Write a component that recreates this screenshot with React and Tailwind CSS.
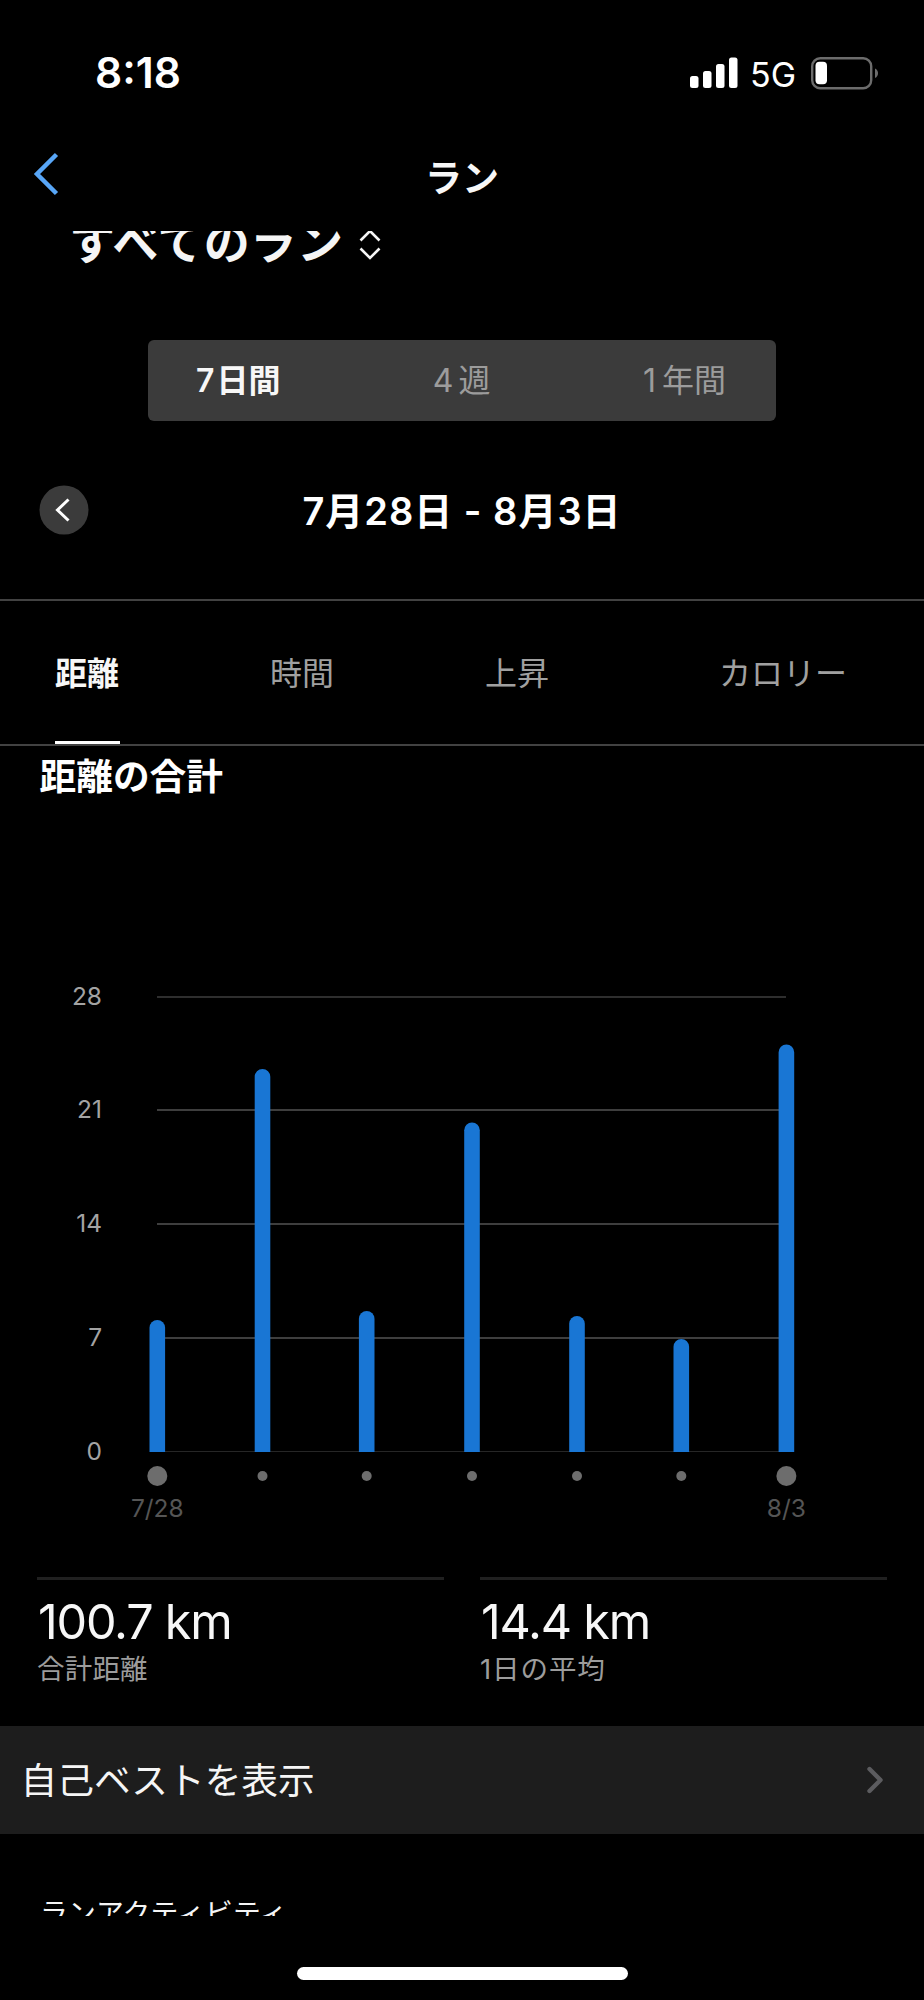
const periods = [
  { count: '7', unit: '日間', style: 'font-semibold text-[#f7f7f7]', gap: 'mr-[2px]' },
  { count: '4', unit: '週', style: 'text-[#9c9c9c]', gap: 'mr-[5px]' },
  { count: '1', unit: '年間', style: 'text-[#9c9c9c]', gap: 'mr-[6px]' },
];

const metrics = [
  { label: '距離', cell: 'w-[215px] pl-[55px]', active: true },
  { label: '時間', cell: 'w-[215px] pl-[55px]', active: false },
  { label: '上昇', cell: 'w-[215px] pl-[55px]', active: false },
  { label: 'カロリー', cell: 'flex-1 pl-[74px]', active: false },
];

const gridLines = [
  { value: 28, y: 57, color: '#2e2e2e' },
  { value: 21, y: 170, color: '#3e3e3e' },
  { value: 14, y: 284, color: '#3e3e3e' },
  { value: 7, y: 398, color: '#3e3e3e' },
  { value: 0, y: 511.5, color: '#262626' },
];

const days = [
  { x: 157.3, top: 380, label: '7/28' },
  { x: 262.5, top: 129 },
  { x: 366.7, top: 371 },
  { x: 472, top: 182.5 },
  { x: 577, top: 376 },
  { x: 681.3, top: 399 },
  { x: 786.4, top: 104.5, label: '8/3' },
];

const stats = [
  { value: '100.7 km', label: '合計距離', style: 'tracking-[0.2px]' },
  { value: '14.4 km', label: '1日の平均', style: 'tracking-[0.9px]' },
];

function StatusBar() {
  return (
    <div className="flex h-[147px] items-start justify-between pt-[48px] pr-[45px] pl-[95px]">
      <span className="text-[42.500px] leading-[50px] font-semibold">8:18</span>
      <div className="flex h-[50px] items-center">
        <svg width="48" height="50" viewBox="0 0 48 50" fill="#fff">
          <rect x="0" y="28" width="8.5" height="12" rx="2.5" />
          <rect x="13" y="23" width="8.5" height="17" rx="2.5" />
          <rect x="26" y="16" width="8.5" height="24" rx="2.5" />
          <rect x="39" y="9.5" width="8.5" height="30.5" rx="2.5" />
        </svg>
        <span className="ml-[12px] w-[60px] pt-[3px] text-[34px] leading-[50px]">5G</span>
        <svg width="69" height="50" viewBox="0 0 69 50">
          <rect x="2.2" y="10.2" width="59" height="30" rx="8" fill="none" stroke="#6c6c6c" strokeWidth="2.4" />
          <rect x="5.5" y="13.8" width="11.5" height="22.4" rx="4" fill="#fff" />
          <path d="M65 20.5c4 1.5 4 8 0 9.500z" fill="#6c6c6c" />
        </svg>
      </div>
    </div>
  );
}

function Header() {
  return (
    <header className="grid h-[84px] grid-cols-3 items-start">
      <svg className="ml-[30px]" width="34" height="54" viewBox="0 0 34 54" fill="none">
        <path d="M26.500 7.500 7 27l19.500 19.500" stroke="#58a6f7" strokeWidth="4.500" />
      </svg>
      <h1 className="pt-[7px] text-center text-[37px] leading-[50px] font-semibold text-[#f7f7f7]">ラン</h1>
    </header>
  );
}

function SportPicker() {
  return (
    <div className="flex h-[109px] items-start overflow-hidden pl-[69px]">
      <span className="-mt-[17px] text-[46px] leading-[56px] font-semibold tracking-[0.6px] text-[#f5f5f5]">
        すべてのラン
      </span>
      <svg className="ml-[14px]" width="24" height="32" viewBox="0 0 24 32" fill="none" stroke="#f5f5f5" strokeWidth="2.600">
        <path d="M2.500 9.500 12 0l9.500 9.500M2.500 17.500 12 27l9.500-9.500" />
      </svg>
    </div>
  );
}

function PeriodSwitch() {
  return (
    <div className="mx-[148px] flex h-[81px] items-center rounded-[6px] bg-[#3b3b3b] pt-px pr-[50px] pl-[48px]">
      <div className="flex w-full justify-between text-[32px]">
        {periods.map((p) => (
          <span key={p.unit} className={p.style}>
            <span className={p.gap}>{p.count}</span>
            {p.unit}
          </span>
        ))}
      </div>
    </div>
  );
}

function DateRange() {
  return (
    <div className="grid h-[178px] grid-cols-[170px_1fr_170px] items-center">
      <svg className="ml-[39px]" width="50" height="50" viewBox="0 0 50 50" fill="none">
        <circle cx="25" cy="25" r="24.500" fill="#3b3b3b" />
        <path d="M29.500 14.500 18.500 25l11 10.500" stroke="#fff" strokeWidth="3" />
      </svg>
      <p className="pt-px text-center text-[38px] leading-[50px] font-semibold tracking-[1px]">7月28日 - 8月3日</p>
    </div>
  );
}

function MetricTabs() {
  return (
    <div className="flex h-[147px] border-y-2 border-[#424242]">
      {metrics.map((m) => (
        <div key={m.label} className={m.cell}>
          <div
            className={
              m.active
                ? 'h-[143px] w-[65px] border-b-3 border-white pt-[49px] text-[32px] leading-[48px] font-semibold text-[#f7f7f7]'
                : 'pt-[49px] text-[32px] leading-[48px] text-[#a0a0a0]'
            }
          >
            {m.label}
          </div>
        </div>
      ))}
    </div>
  );
}

function DistanceChart() {
  return (
    <svg className="block" width="924" height="637" viewBox="0 0 924 637" fontSize="24.5">
      {gridLines.map((g) => (
        <g key={g.value}>
          <text x="102" y={g.y + 8} textAnchor="end" fill="#a3a3a3">{g.value}</text>
          <path d={`M157 ${g.y}H786`} stroke={g.color} strokeWidth={g.value === 0 ? 1 : 2} />
        </g>
      ))}
      {days.map((d) => (
        <g key={d.x}>
          <path
            d={`M${d.x - 7.8} 512V${d.top + 7.8}a7.800 7.800 0 0 1 15.600 0V512z`}
            fill="#1976d4"
          />
          <circle cx={d.x} cy="536" r={d.label ? 10 : 5} fill="#6d6d6d" />
          {d.label && (
            <text x={d.x} y="576.500" textAnchor="middle" fill="#555">{d.label}</text>
          )}
        </g>
      ))}
    </svg>
  );
}

function Stats() {
  return (
    <div className="grid h-[149px] grid-cols-2 gap-[36px] px-[37px]">
      {stats.map((s) => (
        <div key={s.label} className="border-t-3 border-[#202020] pl-px">
          <p className="pt-[14px] text-[48.500px] leading-[56px] tracking-[-1.2px] text-[#f7f7f7]">{s.value}</p>
          <div className="-ml-px text-[27.500px] leading-[38px] text-[#9c9c9c]">
            <p className={s.style}>{s.label}</p>
          </div>
        </div>
      ))}
    </div>
  );
}

function PersonalBestRow() {
  return (
    <div className="flex h-[108px] items-center justify-between bg-[#1d1d1d] pr-[40px] pl-[20.500px]">
      <span className="pt-[2px] text-[36.700px] text-[#f5f5f5]">自己ベストを表示</span>
      <svg width="20" height="32" viewBox="0 0 20 32" fill="none">
        <path d="M5.500 5 16.500 16 5.500 27" stroke="#5c5c5f" strokeWidth="4.400" strokeLinecap="round" strokeLinejoin="round" />
      </svg>
    </div>
  );
}

export default function App() {
  return (
    <div lang="ja" className="flex h-[2000px] w-[924px] flex-col overflow-hidden bg-black font-['Inter','Noto_Sans_CJK_JP',sans-serif] text-white">
      <StatusBar />
      <Header />
      <SportPicker />
      <PeriodSwitch />
      <DateRange />
      <MetricTabs />
      <h2 className="h-[194px] pt-[6px] pl-[39.500px] text-[36.700px] leading-[50px] font-semibold">距離の合計</h2>
      <DistanceChart />
      <Stats />
      <PersonalBestRow />
      <div className="h-[82px] overflow-hidden pt-[59px] pl-[40px] text-[27.800px] leading-[40px] tracking-[0.2px] text-[#f5f5f5]">
        ランアクティビティ
      </div>
      <div className="mx-auto mt-[51px] h-[13px] w-[331px] rounded-full bg-white" />
    </div>
  );
}
